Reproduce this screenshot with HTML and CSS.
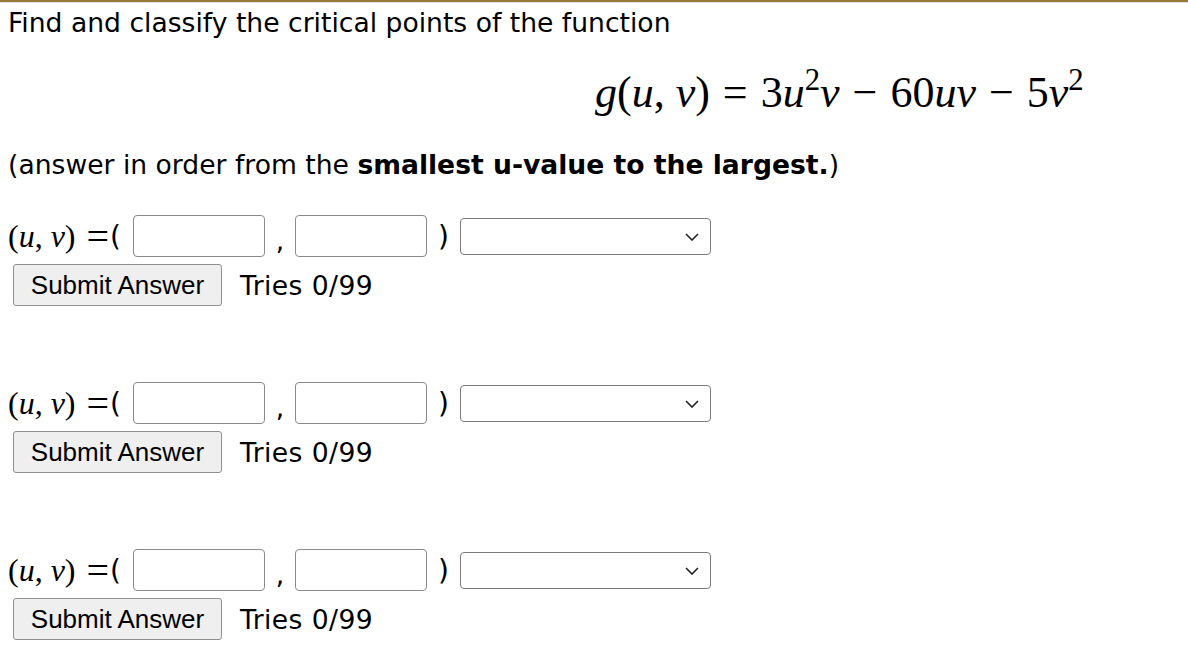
FILE: index.html
```html
<!DOCTYPE html>
<html>
	<head>
		<link rel="stylesheet" href="styles.css">
	</head>
	<body>
		<div class="topbar"></div>
		<div class="problem">
			<p class="prompt">Find and classify the critical points of the function</p>
			<div class="display-eq">
				<i>g</i>(<i>u</i>, <i>v</i>)<span class="op">=</span>3<i>u</i><sup>2</sup><i>v</i><span class="op">&minus;</span>60<i>uv</i><span class="op">&minus;</span>5<i>v</i><sup>2</sup>
			</div>
			<p class="prompt">(answer in order from the <b>smallest u-value to the largest.</b>)</p>

			<div class="part">
				<div class="answer-row">
					<span class="lead"><span class="math">(<i>u</i>, <i>v</i>)</span><span class="eq">=</span><span class="open">(</span></span>
					<input class="num" type="text"/>
					<span class="comma">,</span>
					<input class="num" type="text"/>
					<span class="close">)</span>
					<div class="select-wrap">
						<select class="kind"><option></option><option>local max</option><option>local min</option><option>saddle point</option></select>
						<svg class="chevron" viewBox="0 0 14 8"><path d="M1 1 L7 7 L13 1" fill="none" stroke="#222" stroke-width="1.6"/></svg>
					</div>
				</div>
				<div class="submit-row">
					<button class="submit">Submit Answer</button>
					<span class="tries">Tries 0/99</span>
				</div>
			</div>

			<div class="part">
				<div class="answer-row">
					<span class="lead"><span class="math">(<i>u</i>, <i>v</i>)</span><span class="eq">=</span><span class="open">(</span></span>
					<input class="num" type="text"/>
					<span class="comma">,</span>
					<input class="num" type="text"/>
					<span class="close">)</span>
					<div class="select-wrap">
						<select class="kind"><option></option><option>local max</option><option>local min</option><option>saddle point</option></select>
						<svg class="chevron" viewBox="0 0 14 8"><path d="M1 1 L7 7 L13 1" fill="none" stroke="#222" stroke-width="1.6"/></svg>
					</div>
				</div>
				<div class="submit-row">
					<button class="submit">Submit Answer</button>
					<span class="tries">Tries 0/99</span>
				</div>
			</div>

			<div class="part">
				<div class="answer-row">
					<span class="lead"><span class="math">(<i>u</i>, <i>v</i>)</span><span class="eq">=</span><span class="open">(</span></span>
					<input class="num" type="text"/>
					<span class="comma">,</span>
					<input class="num" type="text"/>
					<span class="close">)</span>
					<div class="select-wrap">
						<select class="kind"><option></option><option>local max</option><option>local min</option><option>saddle point</option></select>
						<svg class="chevron" viewBox="0 0 14 8"><path d="M1 1 L7 7 L13 1" fill="none" stroke="#222" stroke-width="1.6"/></svg>
					</div>
				</div>
				<div class="submit-row">
					<button class="submit">Submit Answer</button>
					<span class="tries">Tries 0/99</span>
				</div>
			</div>
		</div>
	</body>
</html>
```

FILE: styles.css
```css
*{
	margin: 0;
	padding: 0;
	box-sizing: border-box;
}
html,body{
	width: 100%;
	height: 100%;
	background: #fff;
}
body{
	font-family: "DejaVu Sans", Verdana, sans-serif;
	font-size: 26.6px;
	color: #000;
	overflow: hidden;
}
.topbar{
	height: 3px;
	background: #98793a;
	border-bottom: 1px solid #dfe3e8;
}
.problem{
	padding: 4px 8px 0 8px;
}
.prompt{
	line-height: 31px;
}
.display-eq{
	font-family: "Liberation Serif", "Times New Roman", serif;
	font-size: 44px;
	line-height: 50px;
	padding-left: 587px;
	margin: 30px 0 31px 0;
	white-space: nowrap;
}
.display-eq sup{
	font-size: 0.7em;
	line-height: 0;
	vertical-align: 0.55em;
}
.op{
	margin: 0 13px;
}
.part{
	margin-top: 35px;
	margin-bottom: 76px;
}
.part:last-child{
	margin-bottom: 0;
}
.answer-row{
	display: flex;
	align-items: center;
	height: 42px;
}
.lead{
	display: flex;
	align-items: center;
	width: 125px;
	white-space: pre;
}
.math{
	font-family: "Liberation Serif", "Times New Roman", serif;
	font-size: 32px;
}
.eq{
	font-family: "Liberation Serif", "Times New Roman", serif;
	font-size: 40px;
	margin-left: 11px;
}
.open{
	font-size: 28px;
	margin-left: 1px;
}
.num{
	width: 132px;
	height: 42px;
	border: 1px solid #8a8a8a;
	border-radius: 4px;
	font-size: 22px;
	padding: 0 6px;
}
.comma{
	width: 30px;
	text-align: center;
	position: relative;
	top: 4px;
}
.close{
	width: 33px;
	text-align: center;
	font-size: 28px;
}
.kind{
	appearance: none;
	-webkit-appearance: none;
	width: 251px;
	height: 37px;
	border: 1px solid #7a7a7a;
	border-radius: 4px;
	background: #fff;
	font-size: 20px;
}
.select-wrap{
	position: relative;
	display: flex;
}
.chevron{
	position: absolute;
	right: 12px;
	top: 15px;
	width: 14px;
	height: 8px;
	pointer-events: none;
}
.submit-row{
	display: flex;
	align-items: center;
	margin-top: 7px;
	margin-left: 5px;
}
.submit{
	font-family: "Liberation Sans", Arial, sans-serif;
	font-size: 26px;
	width: 209px;
	height: 42px;
	background: #efefef;
	border: 1px solid #8f8f8f;
	border-radius: 3px;
	color: #000;
}
.tries{
	margin-left: 18px;
	letter-spacing: 0.4px;
}
```
